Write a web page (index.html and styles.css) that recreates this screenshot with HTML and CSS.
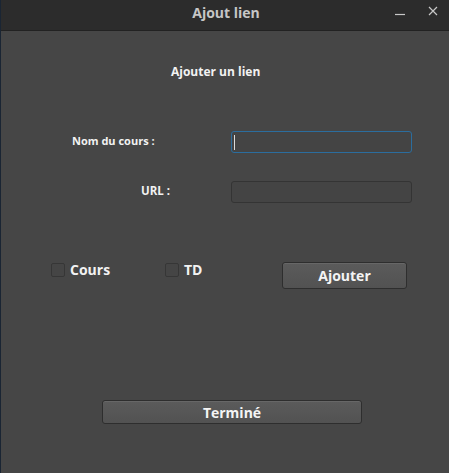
FILE: index.html
```html
<!DOCTYPE html>
<html lang="fr">
<head>
<meta charset="utf-8">
<link rel="stylesheet" href="styles.css">
</head>
<body>
<div class="window">
  <div class="titlebar">
    <span class="title">Ajout lien</span>
    <span class="ctrl min"><svg width="10" height="10" viewBox="0 0 10 10"><path d="M0 8.5H10" stroke="#c8c8c8" stroke-width="1.2"/></svg></span>
    <span class="ctrl close"><svg width="10" height="10" viewBox="0 0 10 10"><path d="M1 1L9 9M9 1L1 9" stroke="#c8c8c8" stroke-width="1.2"/></svg></span>
  </div>
  <div class="content">
    <div class="heading">Ajouter un lien</div>
    <div class="row row-nom">
      <span class="label label-nom">Nom du cours :</span>
      <span class="input focused"><span class="caret"></span></span>
    </div>
    <div class="row row-url">
      <span class="label label-url">URL :</span>
      <span class="input"></span>
    </div>
    <div class="row row-opts">
      <label class="check check-cours"><span class="box"></span><span>Cours</span></label>
      <label class="check check-td"><span class="box"></span><span>TD</span></label>
      <span class="btn btn-add">Ajouter</span>
    </div>
    <div class="row row-done">
      <span class="btn btn-done">Terminé</span>
    </div>
  </div>
</div>
</body>
</html>
```
FILE: styles.css
```css
html, body {
  margin: 0;
  padding: 0;
  background: #464646;
}
.window {
  width: 449px;
  height: 473px;
  background: #464646;
  font-family: "Open Sans", "DejaVu Sans", sans-serif;
  font-weight: 700;
  color: #f2f2f2;
  border-left: 1px solid #1a2533;
  box-sizing: border-box;
  overflow: hidden;
}
.titlebar {
  height: 30px;
  background: #2c2c2c;
  border-bottom: 1px solid #222;
  position: relative;
  display: flex;
  align-items: center;
  justify-content: center;
}
.title {
  font-size: 14px;
  color: #c6c6c6;
  margin-left: 2px;
  margin-top: -5px;
}
.ctrl {
  position: absolute;
  top: 6px;
  width: 10px;
  height: 10px;
  display: flex;
}
.ctrl.min { left: 394px; }
.ctrl.close { left: 427px; }
.content {
  display: flex;
  flex-direction: column;
}
.heading {
  font-size: 12px;
  line-height: 16px;
  margin-top: 33px;
  padding-left: 170px;
}
.row {
  display: flex;
  align-items: center;
}
.label {
  font-size: 11px;
  line-height: 16px;
  margin-top: -3px;
}
.row-nom { margin-top: 51px; }
.row-url { margin-top: 28px; }
.label-nom { margin-left: 71px; width: 159px; }
.label-url { margin-left: 140px; width: 90px; font-size: 11.5px; }
.input {
  width: 181px;
  height: 22px;
  box-sizing: border-box;
  border: 1px solid #343434;
  border-radius: 3px;
  background: #444;
  display: flex;
  align-items: center;
}
.input.focused {
  border: 1.5px solid #2b6d9e;
}
.caret {
  width: 1px;
  height: 15px;
  margin-left: 2px;
  background: #dcdcdc;
}
.row-opts {
  margin-top: 59px;
  align-items: flex-start;
}
.check {
  display: flex;
  align-items: center;
  font-size: 14px;
  line-height: 16px;
}
.box {
  width: 14px;
  height: 14px;
  box-sizing: border-box;
  border: 1px solid #363636;
  border-radius: 2px;
  background: #454545;
  margin-right: 5px;
}
.check-cours { margin-left: 50px; width: 114px; }
.check-td { width: 117px; }
.btn {
  display: flex;
  align-items: center;
  justify-content: center;
  box-sizing: border-box;
  border: 1px solid #2e2e2e;
  border-radius: 3px;
  background: linear-gradient(#5b5b5b, #525252);
  box-shadow: inset 0 1px 0 rgba(255,255,255,0.08);
  color: #f4f4f4;
  font-size: 14px;
}
.btn-add {
  width: 125px;
  height: 27px;
}
.row-done { margin-top: 111px; }
.btn-done {
  margin-left: 101px;
  width: 260px;
  height: 24px;
}
```
